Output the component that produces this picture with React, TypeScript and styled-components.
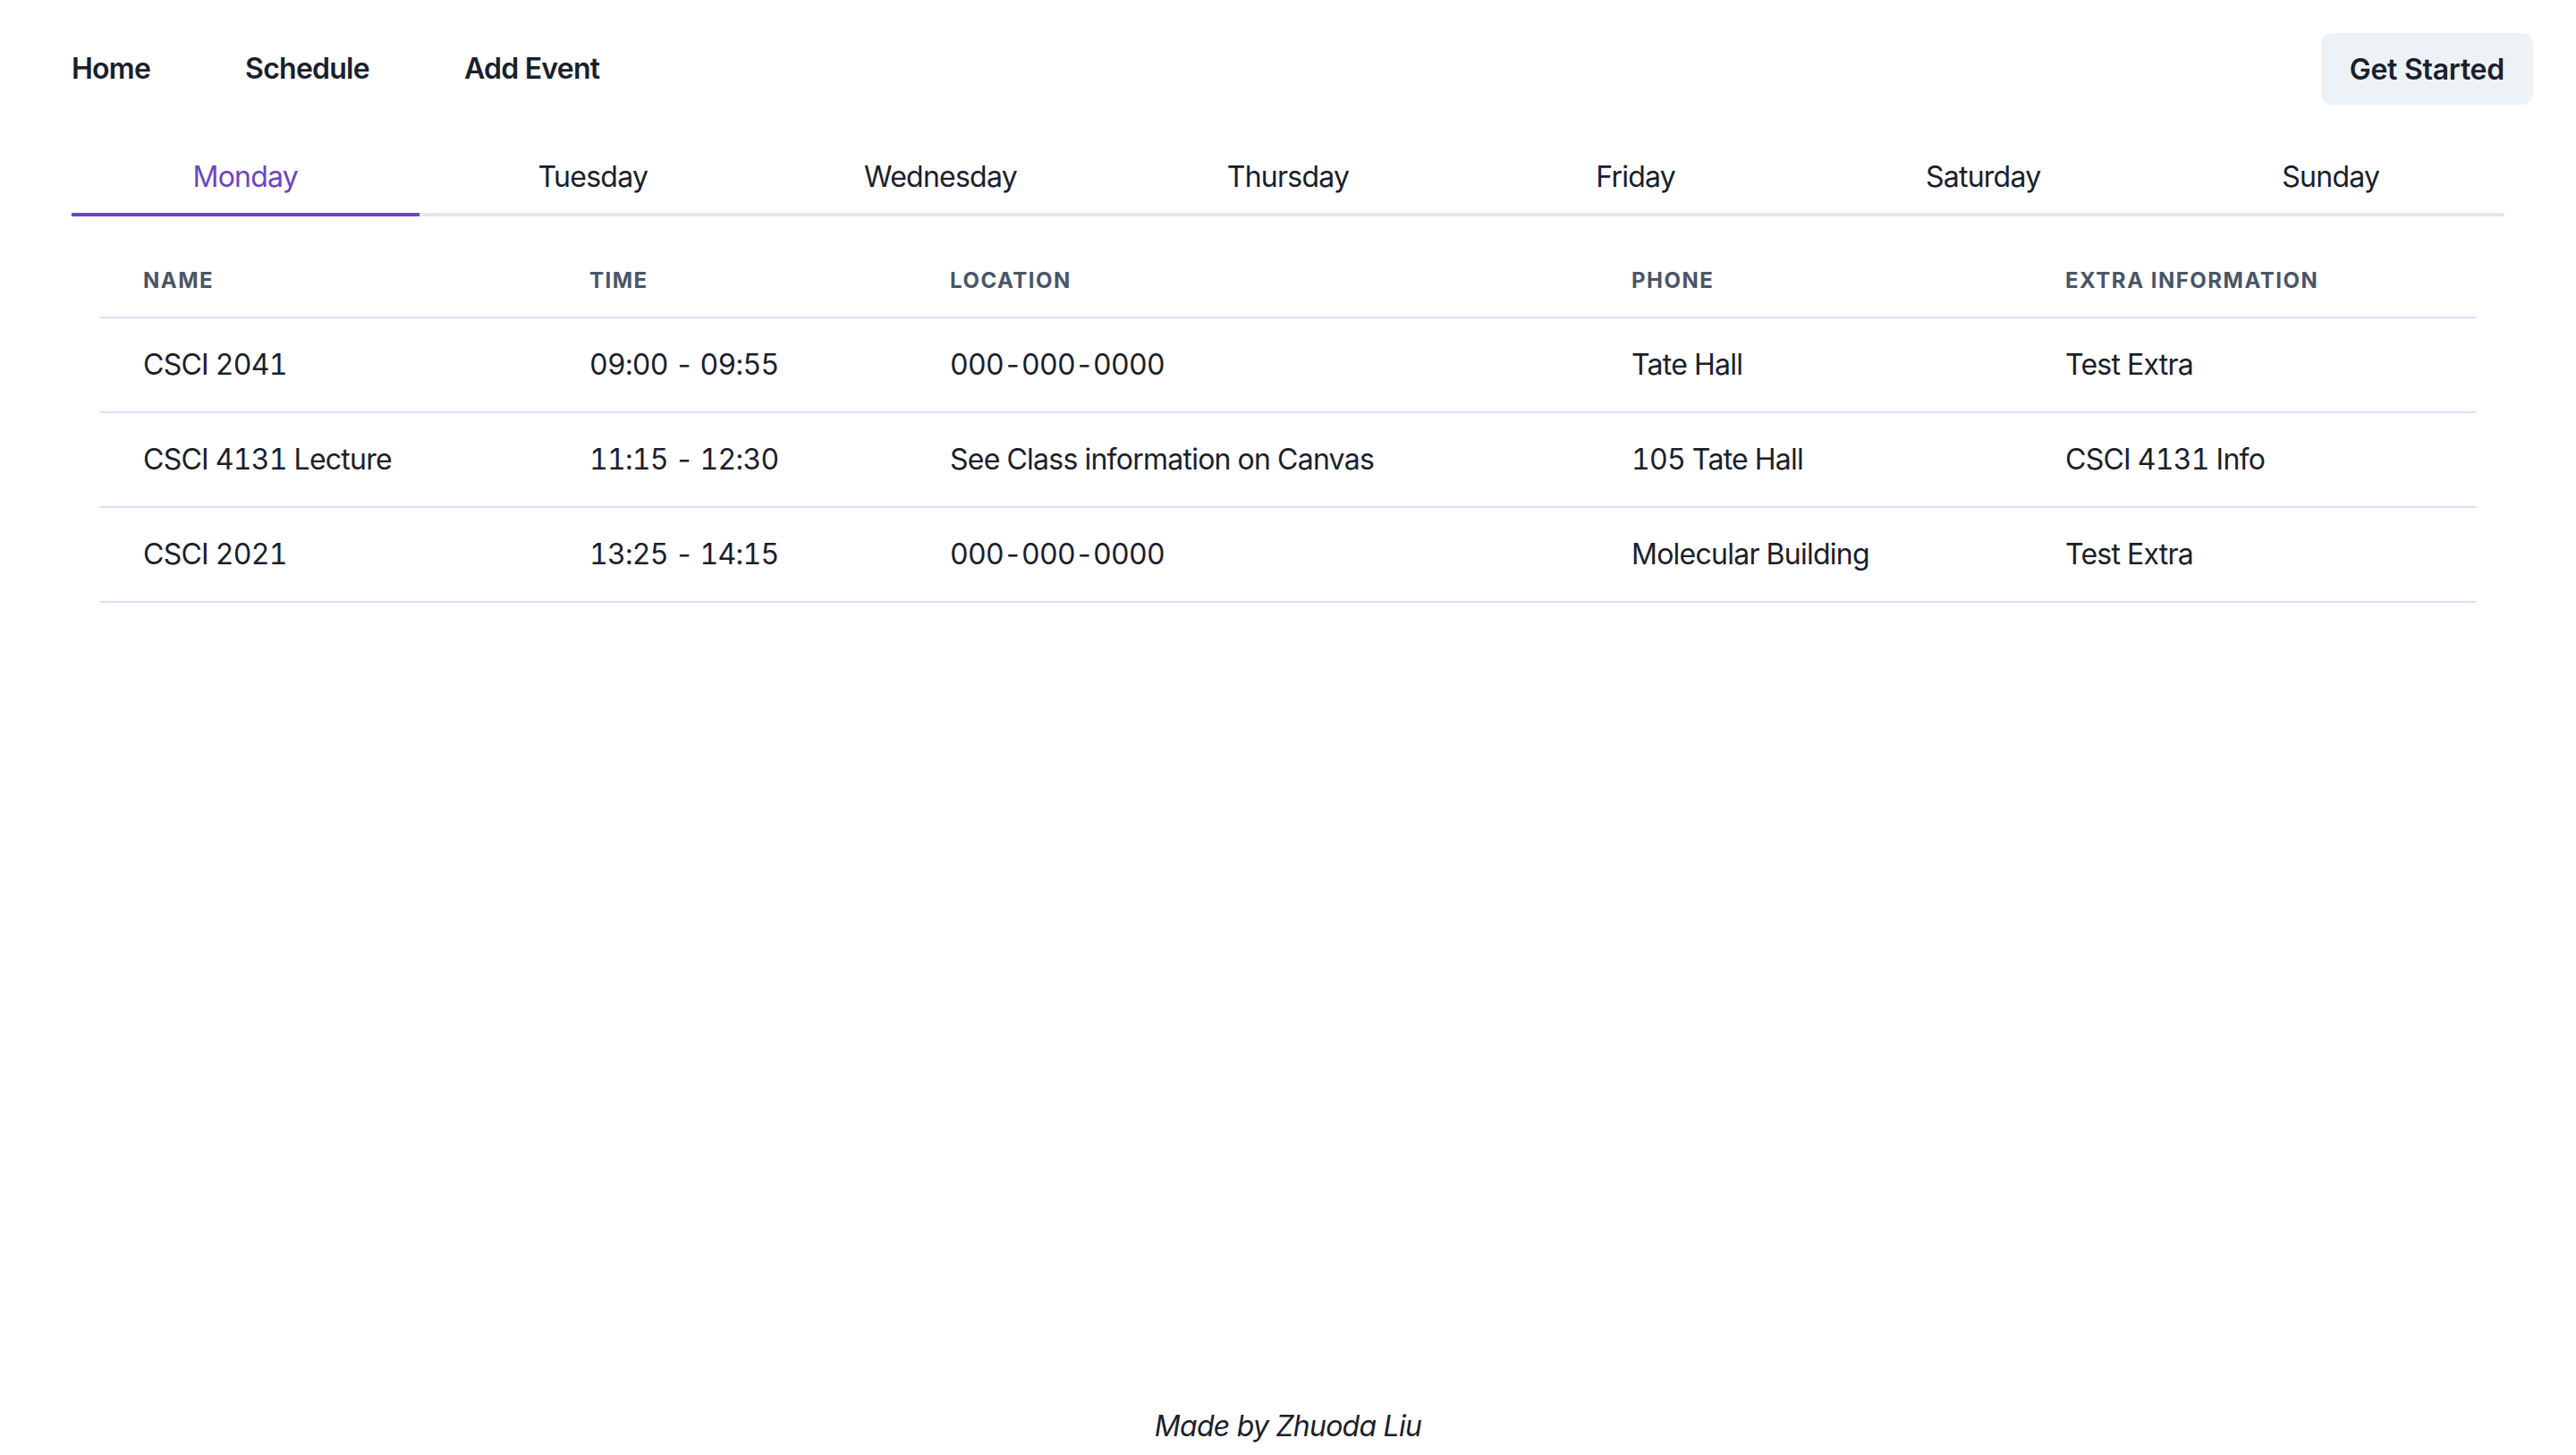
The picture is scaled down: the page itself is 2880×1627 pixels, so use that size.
import React, { useState } from "react"
import styled, { createGlobalStyle } from "styled-components"

const GlobalStyle = createGlobalStyle`
	html, body {
		margin: 0;
		padding: 0;
		background: #ffffff;
	}
	body {
		font-family: Inter, "Noto Sans", "Liberation Sans", sans-serif;
		color: #1A202C;
		letter-spacing: -0.75px;
	}
	* {
		box-sizing: border-box;
	}
`

const Page = styled.div`
	min-height: 100vh;
	display: flex;
	flex-direction: column;
`

const Nav = styled.header`
	display: flex;
	justify-content: space-between;
	align-items: center;
	padding: 37px 48px 0 80px;
`

const NavLinks = styled.nav`
	display: flex;
	align-items: center;
	gap: 106px;
`

const NavLink = styled.a`
	font-size: 32px;
	font-weight: 600;
	line-height: 48px;
	color: #1A202C;
	text-decoration: none;
	cursor: pointer;
`

const StartButton = styled.button`
	height: 80px;
	padding: 0 32px;
	border: none;
	border-radius: 12px;
	background: #EDF2F7;
	color: #1A202C;
	font-family: inherit;
	font-size: 32px;
	font-weight: 600;
	letter-spacing: -0.25px;
	cursor: pointer;
`

const Tabs = styled.section`
	margin: 41px 80px 0;
`

const TabList = styled.div`
	display: flex;
	border-bottom: 4px solid #E2E8F0;
`

const Tab = styled.button<{ $active: boolean }>`
	flex: 1;
	height: 84px;
	margin-bottom: -4px;
	padding: 16px 32px;
	border: none;
	border-bottom: 4px solid ${p => (p.$active ? "#6B46C1" : "transparent")};
	background: transparent;
	color: ${p => (p.$active ? "#6B46C1" : "#1A202C")};
	font-family: inherit;
	font-size: 32px;
	line-height: 48px;
	letter-spacing: -0.75px;
	cursor: pointer;
`

const Panel = styled.div`
	padding: 32px;
`

const Table = styled.table`
	width: 100%;
	border-collapse: collapse;
	table-layout: fixed;
`

const Th = styled.th`
	padding: 24px 48px;
	text-align: left;
	font-size: 24px;
	line-height: 32px;
	font-weight: 700;
	letter-spacing: 1.5px;
	text-transform: uppercase;
	color: #4A5568;
	border-bottom: 2px solid #E9D8FD;
`

const Td = styled.td`
	padding: 32px 48px;
	font-size: 32px;
	line-height: 40px;
	font-variant-numeric: tabular-nums;
	border-bottom: 2px solid #E9D8FD;
	white-space: nowrap;
`

const Footer = styled.footer`
	margin-top: auto;
	padding-bottom: 8px;
	text-align: center;
	font-size: 32px;
	line-height: 48px;
	font-style: italic;
`

const days = ["Monday", "Tuesday", "Wednesday", "Thursday", "Friday", "Saturday", "Sunday"]

const columns = [
	{ label: "Name", width: 499 },
	{ label: "Time", width: 403 },
	{ label: "Location", width: 762 },
	{ label: "Phone", width: 485 },
	{ label: "Extra Information", width: 507 },
]

const events = [
	["CSCI 2041", "09:00 - 09:55", "000-000-0000", "Tate Hall", "Test Extra"],
	["CSCI 4131 Lecture", "11:15 - 12:30", "See Class information on Canvas", "105 Tate Hall", "CSCI 4131 Info"],
	["CSCI 2021", "13:25 - 14:15", "000-000-0000", "Molecular Building", "Test Extra"],
]

export default function App() {
	const [day, setDay] = useState(0)

	return (
		<Page>
			<GlobalStyle />
			<Nav>
				<NavLinks>
					<NavLink>Home</NavLink>
					<NavLink>Schedule</NavLink>
					<NavLink>Add Event</NavLink>
				</NavLinks>
				<StartButton>Get Started</StartButton>
			</Nav>
			<Tabs>
				<TabList>
					{days.map((d, i) => (
						<Tab key={d} $active={i === day} onClick={() => setDay(i)}>{d}</Tab>
					))}
				</TabList>
				<Panel>
					<Table>
						<colgroup>
							{columns.map(c => <col key={c.label} style={{ width: c.width }} />)}
						</colgroup>
						<thead>
							<tr>
								{columns.map(c => <Th key={c.label}>{c.label}</Th>)}
							</tr>
						</thead>
						<tbody>
							{events.map(row => (
								<tr key={row[0]}>
									{row.map((cell, i) => <Td key={i}>{cell}</Td>)}
								</tr>
							))}
						</tbody>
					</Table>
				</Panel>
			</Tabs>
			<Footer>Made by Zhuoda Liu</Footer>
		</Page>
	)
}
